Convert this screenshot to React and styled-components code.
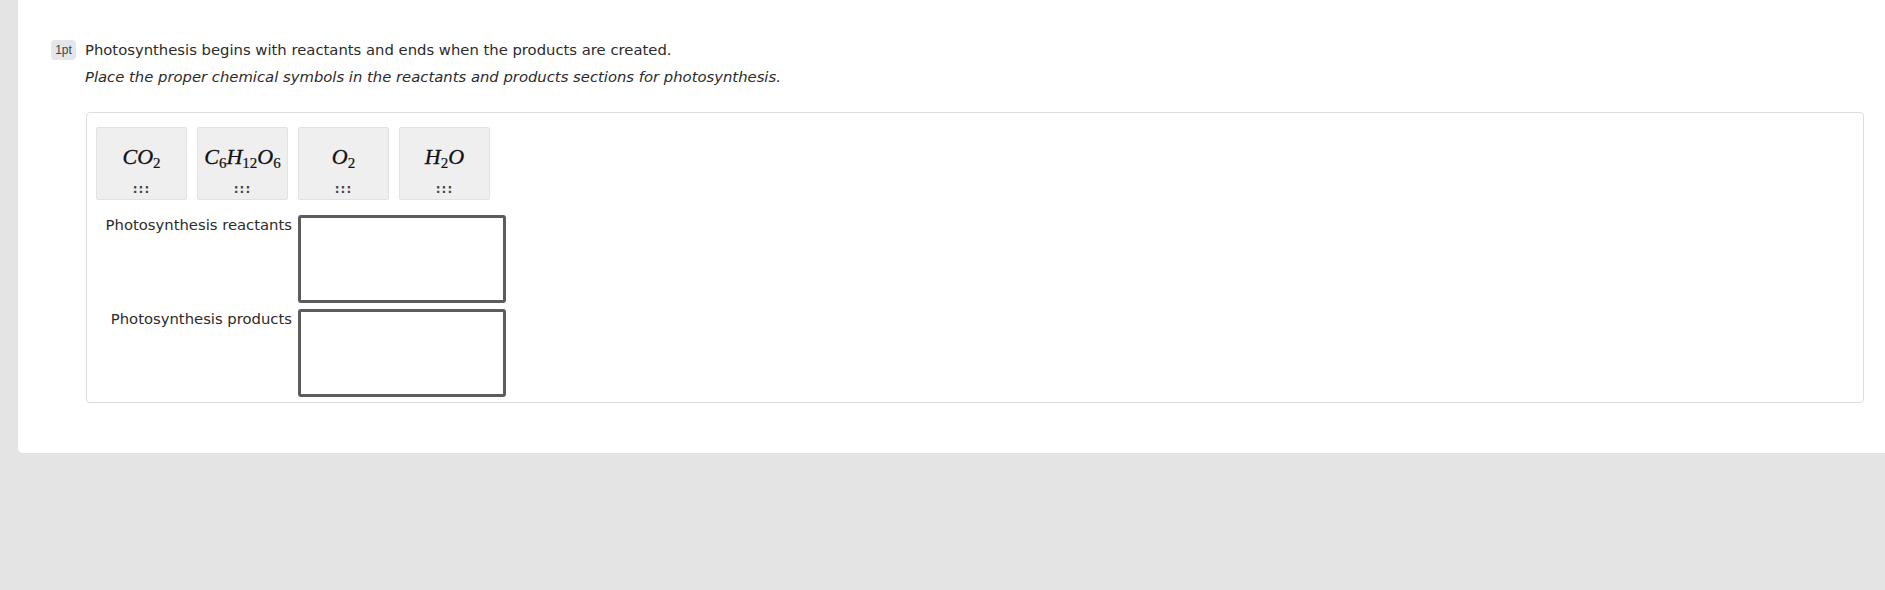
import React from "react";
import styled, { createGlobalStyle } from "styled-components";

const GlobalStyle = createGlobalStyle`
  html, body {
    margin: 0;
    padding: 0;
    background: #e4e4e4;
  }
  body {
    font-family: "DejaVu Sans", Verdana, sans-serif;
    font-size: 14.8px;
    color: #2b2b2b;
  }
`;

const Page = styled.div`
  height: 590px;
  padding-left: 18px;
`;

const Card = styled.div`
  background: #fff;
  border-radius: 0 0 0 5px;
  padding: 40px 21px 50px 33px;
  display: flex;
  gap: 9px;
  align-items: flex-start;
`;

const Points = styled.span`
  flex: none;
  width: 25px;
  height: 20px;
  line-height: 20px;
  text-align: center;
  border-radius: 4px;
  background: #e5e6ec;
  color: #444;
  font-family: "Liberation Sans", Arial, sans-serif;
  font-size: 12px;
`;

const Body = styled.div`
  flex: 1;
  min-width: 0;
`;

const Prompt = styled.p`
  margin: 0;
  line-height: 18px;
  padding-top: 1px;
`;

const Hint = styled.p`
  margin: 9px 0 0 0;
  line-height: 18px;
  font-style: italic;
`;

const Workspace = styled.div`
  margin-top: 26px;
  margin-left: 1px;
  border: 1px solid #dcdcdc;
  border-radius: 4px;
  padding: 14px 9px 5px 9px;
`;

const Bank = styled.div`
  display: flex;
  gap: 10px;
`;

const Tile = styled.div`
  box-sizing: border-box;
  width: 91px;
  height: 73px;
  background: #efefef;
  border: 1px solid #e2e2e2;
  border-radius: 2px;
  padding-top: 16px;
  display: flex;
  flex-direction: column;
  align-items: center;
`;

const Formula = styled.span`
  font-family: "Liberation Serif", "Times New Roman", serif;
  font-style: italic;
  font-size: 22px;
  line-height: 26px;
  color: #111;
  white-space: nowrap;
  -webkit-text-stroke: 0.3px #111;

  sub {
    font-style: normal;
    font-size: 15px;
    vertical-align: -4px;
    line-height: 0;
    -webkit-text-stroke: 0.2px #111;
  }
`;

const Handle = styled.span`
  margin-top: 13px;
  font-size: 12px;
  line-height: 12px;
  letter-spacing: 1px;
  font-weight: bold;
  color: #444;
`;

const Zones = styled.div`
  margin-top: 15px;
  display: grid;
  grid-template-columns: 196px 208px;
  column-gap: 6px;
  row-gap: 6px;
`;

const ZoneLabel = styled.div`
  text-align: right;
  line-height: 18px;
  padding-top: 1px;
`;

const DropBox = styled.div`
  box-sizing: border-box;
  width: 208px;
  height: 88px;
  border: 3px solid #5c5c5c;
  border-radius: 3px;
  background: #fff;
`;

const tiles = [
  <>CO<sub>2</sub></>,
  <>C<sub>6</sub>H<sub>12</sub>O<sub>6</sub></>,
  <>O<sub>2</sub></>,
  <>H<sub>2</sub>O</>,
];

const zones = ["Photosynthesis reactants", "Photosynthesis products"];

export default function App() {
  return (
    <>
      <GlobalStyle />
      <Page>
        <Card>
          <Points>1pt</Points>
          <Body>
            <Prompt>
              Photosynthesis begins with reactants and ends when the products are created.
            </Prompt>
            <Hint>
              Place the proper chemical symbols in the reactants and products sections for
              photosynthesis.
            </Hint>
            <Workspace>
              <Bank>
                {tiles.map((t, i) => (
                  <Tile key={i}>
                    <Formula>{t}</Formula>
                    <Handle>:::</Handle>
                  </Tile>
                ))}
              </Bank>
              <Zones>
                {zones.map((z) => (
                  <React.Fragment key={z}>
                    <ZoneLabel>{z}</ZoneLabel>
                    <DropBox />
                  </React.Fragment>
                ))}
              </Zones>
            </Workspace>
          </Body>
        </Card>
      </Page>
    </>
  );
}
